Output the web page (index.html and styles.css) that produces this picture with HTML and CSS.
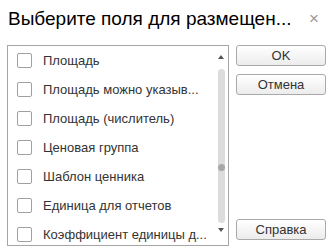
FILE: index.html
```html
<!DOCTYPE html>
<html lang="ru">
<head>
    <meta charset="UTF-8">
    <title>Выберите поля для размещения</title>
    <link rel="stylesheet" href="styles.css">
</head>
<body>

<div class="dialog">
    <div class="dialog-header">
        <h1 class="dialog-title">Выберите поля для размещен...</h1>
        <span class="close">&#215;</span>
    </div>

    <div class="dialog-body">
        <!-- список полей -->
        <div class="field-list">
            <div class="rows">
                <label class="row"><span class="check"></span><span class="caption">Площадь</span></label>
                <label class="row"><span class="check"></span><span class="caption">Площадь можно указыв...</span></label>
                <label class="row"><span class="check"></span><span class="caption">Площадь (числитель)</span></label>
                <label class="row"><span class="check"></span><span class="caption">Ценовая группа</span></label>
                <label class="row"><span class="check"></span><span class="caption">Шаблон ценника</span></label>
                <label class="row"><span class="check"></span><span class="caption">Единица для отчетов</span></label>
                <label class="row"><span class="check"></span><span class="caption">Коэффициент единицы д...</span></label>
            </div>
            <div class="scroll">
                <span class="arrow arrow-up"></span>
                <div class="track"><span class="thumb"></span></div>
                <span class="arrow arrow-down"></span>
            </div>
        </div>

        <!-- кнопки -->
        <div class="buttons">
            <button class="btn">OK</button>
            <button class="btn">Отмена</button>
            <button class="btn btn-help">Справка</button>
        </div>
    </div>
</div>

</body>
</html>
```

FILE: styles.css
```css
body {
    margin: 0;
    background-color: #fff;
    font-family: "Liberation Sans", Arial, sans-serif;
    color: #333;
}

.dialog {
    width: 333px;
    height: 252px;
    overflow: hidden;
}

.dialog-header {
    display: flex;
    align-items: center;
    justify-content: space-between;
    height: 37px;
    padding: 0 14px 0 8px;
}

.dialog-title {
    margin: 0;
    font-size: 19px;
    font-weight: normal;
    color: #000;
}

.close {
    font-size: 17px;
    color: #999;
}

.dialog-body {
    display: flex;
    padding: 8px 7px 0 7px;
}

.field-list {
    display: flex;
    width: 221px;
    height: 199px;
    border: 1px solid #a6a6a6;
    overflow: hidden;
}

.rows {
    flex: 1;
    min-width: 0;
}

.row {
    display: flex;
    align-items: center;
    height: 29px;
    padding-left: 9px;
    font-size: 13px;
}

.check {
    flex: none;
    width: 13px;
    height: 13px;
    border: 1px solid #a0a0a0;
    border-radius: 2px;
    margin-right: 11px;
}

.caption {
    white-space: nowrap;
}

.scroll {
    flex: none;
    width: 14px;
    display: flex;
    flex-direction: column;
    align-items: center;
    padding-top: 9px;
}

.arrow {
    width: 0;
    height: 0;
    border-left: 3px solid transparent;
    border-right: 3px solid transparent;
}

.arrow-up {
    border-bottom: 4px solid #555;
}

.arrow-down {
    border-top: 4px solid #555;
    margin-top: 5px;
}

.track {
    position: relative;
    width: 7px;
    height: 154px;
    margin-top: 10px;
    border-radius: 4px;
    background-color: #dcdcdc;
}

.thumb {
    position: absolute;
    left: 0;
    top: 95px;
    width: 7px;
    height: 7px;
    border-radius: 50%;
    background-color: #a8a8a8;
}

.buttons {
    display: flex;
    flex-direction: column;
    margin-left: 7px;
}

.btn {
    width: 90px;
    height: 21px;
    margin-bottom: 8px;
    padding: 0;
    border: 1px solid #a9a9a9;
    border-radius: 3px;
    background: linear-gradient(#ffffff, #ececec);
    font-family: "Liberation Sans", Arial, sans-serif;
    font-size: 13px;
    color: #333;
}

.btn-help {
    margin-top: auto;
    margin-bottom: 6px;
}
```
